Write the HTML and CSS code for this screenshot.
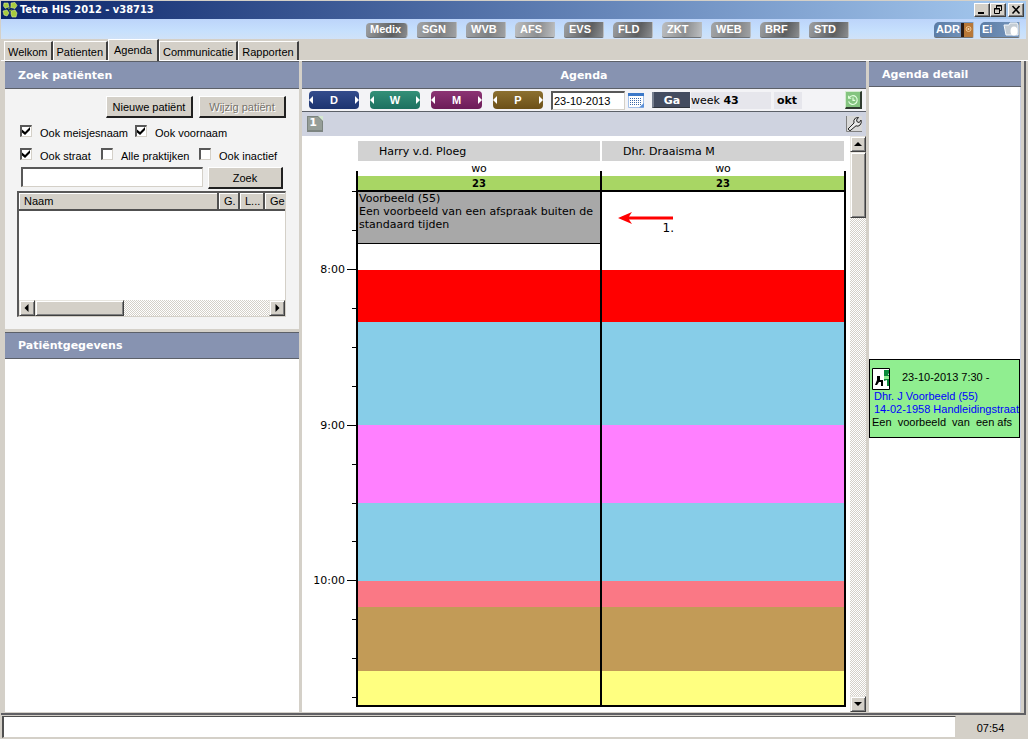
FILE: index.html
```html
<!DOCTYPE html>
<html lang="nl">
<head>
<meta charset="utf-8">
<title>Tetra HIS 2012 - v38713</title>
<link rel="stylesheet" href="styles.css">
</head>
<body>
<div class="app">
  <header class="titlebar">
    <svg class="logo" viewBox="0 0 16 16" aria-hidden="true">
      <g fill="#a8cc3c" stroke="#dcec9c" stroke-width=".6">
        <path d="M2 1l4 0 1 4-4 1-1.500-2z"/><path d="M9 1l4-.5 2 3-2 3-4-1z"/>
        <path d="M1 9l4-1 2 3-2 3-3-1z"/><path d="M9 9l4-1 2 3-1 4-4 0-1-3z"/>
      </g>
      <path d="M6 7l3-2M7 9l3-1M4 7l-1-1" stroke="#7aa82c"/>
    </svg>
    <h1 class="title">Tetra HIS 2012 - v38713</h1>
    <div class="winbtns">
      <button class="winbtn" aria-label="Minimaliseren"><svg viewBox="0 0 14 12"><path d="M3 8h6v2H3z"/></svg></button>
      <button class="winbtn" aria-label="Herstellen"><svg viewBox="0 0 14 12"><path d="M5.500 4V1.500h5v5H9M5 2h6M3.500 4.500h5v5h-5zM3 5h6" fill="none" stroke="#000"/></svg></button>
      <button class="winbtn last" aria-label="Sluiten"><svg viewBox="0 0 14 12"><path d="M3.500 2l7 7.500M10.500 2l-7 7.500" stroke="#000" stroke-width="1.600"/></svg></button>
    </div>
  </header>
  <nav class="modules">
    <button class="mod dark medix">Medix</button>
    <button class="mod">SGN</button>
    <button class="mod">WVB</button>
    <button class="mod light">AFS</button>
    <button class="mod dark">EVS</button>
    <button class="mod dark">FLD</button>
    <button class="mod light">ZKT</button>
    <button class="mod">WEB</button>
    <button class="mod dark">BRF</button>
    <button class="mod dark">STD</button>
    <span class="spring"></span>
    <button class="mod blue">ADR<svg viewBox="0 0 12 16"><path d="M1 1h11v14H1z" fill="#b87838"/><path d="M0 1h3v14H0z" fill="#2c1c14"/><circle cx="7.500" cy="7" r="2.500" fill="none" stroke="#f4c890"/><circle cx="7.500" cy="7" r="1" fill="#fbe0b8"/></svg></button>
    <button class="mod blue">Ei<svg class="folder" viewBox="0 0 16 16"><path d="M1 3h5l1-2h7l1 2v10H3z" fill="#c4ccd4" stroke="#f4f8fc"/><ellipse cx="11" cy="9" rx="3.500" ry="4.500" fill="#fff"/></svg></button>
  </nav>
  <nav class="tabs">
    <button class="tab">Welkom</button>
    <button class="tab">Patienten</button>
    <button class="tab active">Agenda</button>
    <button class="tab">Communicatie</button>
    <button class="tab">Rapporten</button>
  </nav>

  <main class="workspace">
    <section class="left">
      <h2 class="head">Zoek patiënten</h2>
      <form class="search">
        <div class="actions">
          <button type="button" class="btn">Nieuwe patiënt</button>
          <button type="button" class="btn" disabled>Wijzig patiënt</button>
        </div>
        <div class="checks">
          <label class="check c-one"><input type="checkbox" checked>Ook meisjesnaam</label>
          <label class="check"><input type="checkbox" checked>Ook voornaam</label>
        </div>
        <div class="checks">
          <label class="check c-two"><input type="checkbox" checked>Ook straat</label>
          <label class="check c-three"><input type="checkbox">Alle praktijken</label>
          <label class="check"><input type="checkbox">Ook inactief</label>
        </div>
        <div class="query">
          <input class="box" type="text" aria-label="Zoekterm">
          <button type="button" class="btn">Zoek</button>
        </div>
        <div class="list">
          <table class="results">
            <colgroup><col><col class="w-g"><col class="w-l"><col class="w-ge"></colgroup>
            <thead><tr><th>Naam</th><th>G.</th><th>L...</th><th>Ge</th></tr></thead>
          </table>
          <div class="blank"></div>
          <div class="hscroll">
            <button type="button" class="sb" aria-label="Naar links"><svg viewBox="0 0 8 8"><path d="M5.500 0v8L1.500 4z"/></svg></button>
            <span class="hthumb"></span>
            <span class="spring"></span>
            <button type="button" class="sb" aria-label="Naar rechts"><svg viewBox="0 0 8 8"><path d="M2.500 0v8l4-4z"/></svg></button>
          </div>
        </div>
      </form>
      <h2 class="head second">Patiëntgegevens</h2>
      <div class="details"></div>
    </section>

    <section class="center">
      <h2 class="head mid">Agenda</h2>
      <div class="datebar">
        <button class="step d"><i></i>D<i></i></button>
        <button class="step w"><i></i>W<i></i></button>
        <button class="step m"><i></i>M<i></i></button>
        <button class="step p"><i></i>P<i></i></button>
        <input class="date" type="text" value="23-10-2013" aria-label="Datum">
        <button class="icon cal" aria-label="Kalender"><svg viewBox="0 0 16 16"><path d="M.5 2.500h15v13H.5z" fill="#fff" stroke="#a4c0e8"/><path d="M0 1h16v3H0z" fill="#3c78c8"/><path d="M2 6.500h12M2 8.500h12M2 10.500h12M2 12.500h12" stroke="#3c68a8" stroke-dasharray="1 1"/><path d="M11 15.500h5V11z" fill="#5c90d8"/></svg></button>
        <button class="go">Ga</button>
        <span class="week">week <b>43</b></span>
        <b class="month">okt</b>
        <span class="spring"></span>
        <button class="icon clock" aria-label="Nu"><svg viewBox="0 0 16 16"><path d="M3.500 5.500a5 5 0 1 1-.5 4M3 3v3h3M8 5v3.500h2.500" fill="none" stroke="#e4ffe0" stroke-width="1.300"/></svg></button>
      </div>
      <div class="viewbar">
        <button class="icon one" aria-label="Weergave 1"><svg viewBox="0 0 16 16"><path d="M0 0h12l4 4v12H0z" fill="#7c8480"/><path d="M1 1h10l4 4v9H1z" fill="#969e98"/><path d="M11 0l5 5V0z" fill="#d4e8d0"/></svg><span>1</span></button>
        <button class="icon wrench" aria-label="Instellingen"><svg viewBox="0 0 16 16"><path d="M.5 0v15.500H16" fill="none" stroke="#808080"/><path d="M2 13l6-6q-1-3 1.500-5l3-.5-2 2.500.8 2 2 .5L15 4q1 3-1 5t-4 .8l-6 5z" fill="#e8e8e8" stroke="#222"/></svg></button>
      </div>
      <div class="calendar">
        <div class="scale">
          <div class="q"></div><div class="q"></div>
          <div class="q hour">8:00</div><div class="q"></div><div class="q"></div><div class="q"></div>
          <div class="q hour">9:00</div><div class="q"></div><div class="q"></div><div class="q"></div>
          <div class="q hour">10:00</div><div class="q"></div><div class="q"></div><div class="q rest"></div>
        </div>
        <div class="days">
          <div class="names"><div>Harry v.d. Ploeg</div><div>Dhr. Draaisma M</div></div>
          <div class="weekdays"><div>wo</div><div>wo</div></div>
          <div class="columns">
            <div class="col">
              <div class="num">23</div>
              <div class="appt m20">Voorbeeld (55)<br>Een voorbeeld van een afspraak buiten de standaard tijden</div>
              <div class="m10"></div>
              <div class="m20 red"></div><div class="m40 sky"></div><div class="m30 pink"></div><div class="m30 sky"></div>
              <div class="m10 rose"></div><div class="m25 brown"></div><div class="m13 yellow"></div>
            </div>
            <div class="col">
              <div class="num">23</div>
              <div class="m30"></div>
              <div class="m20 red"></div><div class="m40 sky"></div><div class="m30 pink"></div><div class="m30 sky"></div>
              <div class="m10 rose"></div><div class="m25 brown"></div><div class="m13 yellow"></div>
              <div class="note"><svg viewBox="0 0 56 12"><path d="M0 6l14-6-3 4.500h44v3H11l3 4.500z" fill="#f00"/></svg><span>1.</span></div>
            </div>
          </div>
        </div>
        <div class="vscroll">
          <button class="sb" aria-label="Omhoog"><svg viewBox="0 0 8 8"><path d="M0 6h8L4 2z"/></svg></button>
          <span class="vthumb"></span>
          <span class="spring"></span>
          <button class="sb" aria-label="Omlaag"><svg viewBox="0 0 8 8"><path d="M0 2h8L4 6z"/></svg></button>
        </div>
      </div>
    </section>

    <aside class="right">
      <h2 class="head">Agenda detail</h2>
      <div class="pane">
        <article class="card">
          <div class="when"><svg viewBox="0 0 18 22"><path d="M.5.5h17v21H.5z" fill="#fff" stroke="#000"/><path d="M12 2h5v3l-1 2h1v11h-2v-6l-3 1V8z" fill="#0a8a3a"/><path d="M12 8h5v3h-5z" fill="#90ee90"/><path d="M3 17l2-5V8h3v4h3v6H9v-4H7l-2 3z"/></svg><span>23-10-2013 7:30 -</span></div>
          <div class="who">Dhr. J Voorbeeld (55)</div>
          <div class="who">14-02-1958 Handleidingstraat</div>
          <div class="what">Een&nbsp; voorbeeld&nbsp; van&nbsp; een afs</div>
        </article>
      </div>
    </aside>
  </main>

  <footer class="status">
    <div class="message"></div>
    <time class="time">07:54</time>
  </footer>
</div>
</body>
</html>
```
FILE: styles.css
```css
* { box-sizing: border-box; }
body { margin: 0; font: 11px/14px "Liberation Sans", Arial, sans-serif; color: #000; }
button, input { font: inherit; color: inherit; border: 0; padding: 0; margin: 0; }
h1, h2 { margin: 0; }
svg { display: block; }
.spring { flex: 1; }

.app { height: 100vh; display: flex; flex-direction: column; background: #d4d0c8; padding: 1px 0 0 1px; }

.titlebar { display: flex; align-items: center; height: 18px; flex: none; margin-right: 2px; padding-left: 1px; background: linear-gradient(90deg, #0a246a, #a6caf0); }
.logo { width: 16px; height: 16px; margin-right: 2px; }
.title { flex: 1; font: bold 11px/18px "DejaVu Sans Condensed", "DejaVu Sans", sans-serif; color: #fff; }
.winbtns { display: flex; margin-right: 2px; }
.winbtn { width: 16px; height: 14px; background: #d4d0c8; border: 1px solid; border-color: #fff #404040 #404040 #fff; box-shadow: inset -1px -1px #808080; }
.winbtn svg { width: 14px; height: 12px; }
.winbtn.last { margin-left: 2px; }

.modules { display: flex; gap: 9px; align-items: center; height: 20px; flex: none; margin-right: 2px; padding: 2px 6px 0 365px; background: linear-gradient(#bcd4fa, #c6e0fd 60%, #d0e2f8); }
.mod { display: flex; align-items: center; width: 40px; height: 16px; padding-left: 5px; border-radius: 5px 0 2px 2px; border-bottom: 1px solid #707478; border-right: 1px solid #b8bcc0; color: #fff; font: bold 11px/15px "Liberation Sans Narrow", "Liberation Sans", sans-serif; background: linear-gradient(100deg, #a4a6a8, #7c7e80 60%, #a0a2a4); }
.mod.light { background: linear-gradient(100deg, #bcbec0, #8c8e90 60%, #bcbec0); }
.mod.dark { background: linear-gradient(110deg, #a0a2a4, #5c5e60 65%, #8c8e90); }
.mod.medix { width: 42px; height: 15px; padding-left: 4px; border-radius: 4px; }
.mod.blue { background: linear-gradient(100deg, #5c7ca4, #7898c0); padding-left: 2px; justify-content: space-between; }
.mod.blue + .mod.blue { margin-left: -3px; }
.mod svg { flex: none; width: 12px; height: 16px; }
.mod .folder { width: 16px; }

.tabs { display: flex; align-items: flex-end; height: 22px; flex: none; padding-left: 3px; border-bottom: 1px solid #fff; }
.tab { flex: none; height: 19px; padding: 2px 3px 0; background: #d4d0c8; border: solid; border-width: 1px 2px 0 1px; border-color: #fff #404040 #fff #fff; }
.tab.active { height: 22px; margin-bottom: -1px; padding: 0 5px 2px; }

.workspace { flex: 1; min-height: 0; display: grid; grid-template-columns: 294fr 564fr 152fr; gap: 3px; padding: 0 3px 1px 4px; margin-right: 2px; border-right: 2px solid #606064; border-bottom: 2px solid #606064; }
.left, .center, .right { display: flex; flex-direction: column; min-width: 0; min-height: 0; }
.head { flex: none; height: 28px; padding-left: 13px; background: #8793b1; border-top: 1px solid #5c6068; border-bottom: 1px solid #5c6068; color: #fff; font: bold 11px/28px "DejaVu Sans", Verdana, sans-serif; }
.head.mid { padding: 0; text-align: center; }
.head.second { height: 27px; margin-top: 3px; line-height: 26px; }
.right .head { height: 26px; line-height: 26px; }

.search { flex: none; height: 240px; padding: 7px 13px 0 12px; background: #f3f3f3; }
.actions { display: flex; justify-content: flex-end; gap: 6px; }
.btn { height: 22px; width: 87px; background: #d4d0c8; border: solid; border-width: 1px 2px 2px 1px; border-color: #fff #202020 #202020 #fff; white-space: nowrap; }
.btn:disabled { color: #77736c; text-shadow: 1px 1px #fff; }
.checks { display: flex; height: 23px; padding-left: 3px; align-items: center; }
.actions + .checks { margin-top: 3px; }
.check { display: flex; align-items: center; gap: 8px; white-space: nowrap; }
.c-one { width: 115px; } .c-two { width: 81px; } .c-three { width: 98px; }
.check input { appearance: none; flex: none; width: 12px; height: 12px; margin-bottom: 3px; background: #fff; border: solid; border-width: 2px 1px 1px 2px; border-color: #585858 #d4d0c8 #d4d0c8 #585858; }
.check input:checked::before { content: ""; display: block; width: 8px; height: 8px; background: #000; clip-path: polygon(0 30%, 38% 62%, 100% 0, 100% 38%, 38% 100%, 0 68%); }
.query { display: flex; gap: 5px; padding: 0 3px 0 4px; }
.box { flex: 1; min-width: 0; height: 20px; border: solid; border-width: 2px 1px 1px 2px; border-color: #585858 #d4d0c8 #d4d0c8 #585858; background: #fff; }
.query .btn { width: 75px; }
.list { display: flex; flex-direction: column; height: 126px; margin-top: 2px; border: solid; border-width: 2px 1px 1px 2px; border-color: #585858 #d4d0c8 #d4d0c8 #585858; background: #fff; }
.results { width: 100%; table-layout: fixed; border-collapse: collapse; }
.results th { height: 17px; padding: 0 0 0 5px; overflow: hidden; text-align: left; font-weight: normal; background: #d4d0c8; border: solid; border-width: 0 2px 2px 0; border-color: #505050; box-shadow: inset 1px 1px #fff; }
.results th:last-child { border-right: 0; }
.w-g { width: 21px; } .w-l { width: 25px; } .w-ge { width: 21px; }
.blank { flex: 1; }
.hscroll, .vscroll { display: flex; background: conic-gradient(#d4d0c8 25%, #fff 0 50%, #d4d0c8 0 75%, #fff 0) 0 0 / 2px 2px; }
.sb, .hthumb, .vthumb { flex: none; background: #d4d0c8; border: 1px solid; border-color: #e8e6e0 #404040 #404040 #e8e6e0; box-shadow: inset 1px 1px #fff, inset -1px -1px #808080; }
.sb { display: grid; place-items: center; width: 16px; height: 16px; }
.sb svg { width: 8px; height: 8px; }
.hthumb { width: 89px; height: 16px; }
.details { flex: 1; background: #fff; }

.datebar { flex: none; display: flex; align-items: center; height: 23px; padding: 0 4px 0 7px; background: #f3f3f6; border-bottom: 1px solid #5c6068; }
.step { flex: none; display: flex; align-items: center; justify-content: space-between; width: 50px; height: 18px; margin-right: 11px; border-radius: 4px; color: #fff; font: bold 11px/18px "Liberation Sans", sans-serif; }
.step i { border: solid transparent; border-width: 4px 4px 4px 0; border-right-color: #fff; }
.step i:last-child { border-width: 4px 0 4px 4px; border-left-color: #fff; }
.d { background: linear-gradient(#344c8c, #1c3470); }
.w { background: linear-gradient(#349078, #1c7060); }
.m { background: linear-gradient(#8c3474, #6c1c58); width: 51px; }
.p { background: linear-gradient(#8c7030, #6c5018); margin-right: 8px; }
.date { flex: none; width: 74px; height: 19px; padding-left: 1px; background: #fff; border: solid; border-width: 2px 1px 1px 2px; border-color: #585858 #d4d0c8 #d4d0c8 #585858; }
.icon { flex: none; width: 16px; height: 16px; background: none; }
.cal { margin: 0 8px 0 3px; }
.go { flex: none; width: 38px; height: 16px; padding-top: 2px; background: #444c60; border-left: 2px solid #788090; border-bottom: 1px solid #30343c; color: #fff; font: bold 11px/13px "DejaVu Sans", sans-serif; }
.week, .month { flex: none; height: 17px; background: #e6e6ec; font: 11px/18px "DejaVu Sans", sans-serif; }
.week { width: 80px; margin: 0 3px 0 1px; }
.month { width: 28px; padding-left: 3px; font-weight: bold; }
.clock { width: 17px; height: 18px; background: #84c480; border: solid; border-width: 1px 2px 2px 1px; border-color: #d4ecd0 #303c30 #303c30 #d4ecd0; }
.viewbar { flex: none; display: flex; align-items: center; justify-content: space-between; height: 24px; padding: 0 4px 0 5px; background: #cfd3e0; }
.one { display: grid; }
.one svg, .one span { grid-area: 1 / 1; }
.one span { padding-right: 4px; color: #fff; font: bold 11px/14px "DejaVu Sans", sans-serif; }
.wrench { background: #d8d8d8; }

.calendar { flex: 1; min-height: 0; display: flex; background: #fff; font: 11px/13px "DejaVu Sans", Verdana, sans-serif; }
.scale { flex: none; width: 54px; display: flex; flex-direction: column; padding: 55px 0 7px; }
.q { flex: 15 0 0; min-height: 0; display: flex; justify-content: flex-end; gap: 2px; line-height: 13px; }
.q::after { content: ""; width: 4px; height: 1px; background: #000; }
.q.hour { margin-top: -6px; margin-bottom: 6px; }
.q.hour::after { width: 9px; margin-top: 6px; }
.q.rest { flex-grow: 3; }
.days { flex: 1; min-width: 0; display: flex; flex-direction: column; padding: 5px 4px 5px 0; }
.names, .weekdays { flex: none; display: grid; grid-template-columns: 1fr 1fr; gap: 2px; padding: 0 2px; }
.names div { height: 20px; padding-left: 21px; background: #d2d2d2; line-height: 22px; }
.weekdays { height: 10px; text-align: center; line-height: 15px; }
.columns { flex: 1; min-height: 0; display: flex; border: 2px solid #000; border-top: 0; padding-top: 5px; position: relative; }
.columns::before { content: ""; position: absolute; top: 0; left: 50%; width: 2px; height: 5px; margin-left: -1px; background: #000; }
.col { flex: 1 1 0; min-width: 0; box-sizing: content-box; display: flex; flex-direction: column; position: relative; }
.col + .col { border-left: 2px solid #000; }
.num { flex: none; height: 16px; background: #a8d664; border-bottom: 2px solid #000; text-align: center; font-weight: bold; font-size: 10px; line-height: 15px; }
.m10 { flex: 10 0 0; } .m13 { flex: 13 0 0; } .m20 { flex: 20 0 0; } .m25 { flex: 25 0 0; } .m30 { flex: 30 0 0; } .m40 { flex: 40 0 0; }
.appt { padding-left: 1px; overflow: hidden; background: #a8a8a8; box-shadow: inset 0 -1px #000; }
.red { background: #f00; } .sky { background: #87cde8; } .pink { background: #ff80ff; }
.rose { background: #fa7885; } .brown { background: #c29b57; } .yellow { background: #ffff80; }
.note { position: absolute; top: 36px; left: 16px; width: 56px; font-size: 12px; text-align: right; }
.note svg { width: 56px; height: 12px; }
.note span { display: block; line-height: 8px; }
.vscroll { flex: none; flex-direction: column; width: 16px; }
.vthumb { height: 66px; }

.pane { flex: 1; background: #fff; border-right: 1px solid #ccd0e0; padding-top: 272px; }
.card { height: 79px; padding: 8px 0 0 2px; overflow: hidden; background: #90ee90; border: 1px solid #000; white-space: nowrap; line-height: 13px; }
.when { display: flex; align-items: center; gap: 12px; height: 22px; }
.when svg { width: 18px; height: 22px; }
.when span { padding-bottom: 4px; }
.who { padding-left: 2px; color: #00f; }

.status { flex: none; display: flex; height: 24px; padding-top: 1px; margin-left: 1px; }
.message { flex: 1; margin-bottom: 1px; background: #fff; border: solid; border-width: 1px 1px 1px 2px; border-color: #505050 #d4d0c8 #d4d0c8 #505050; }
.time { width: 72px; padding-right: 3px; text-align: center; line-height: 24px; }
```
